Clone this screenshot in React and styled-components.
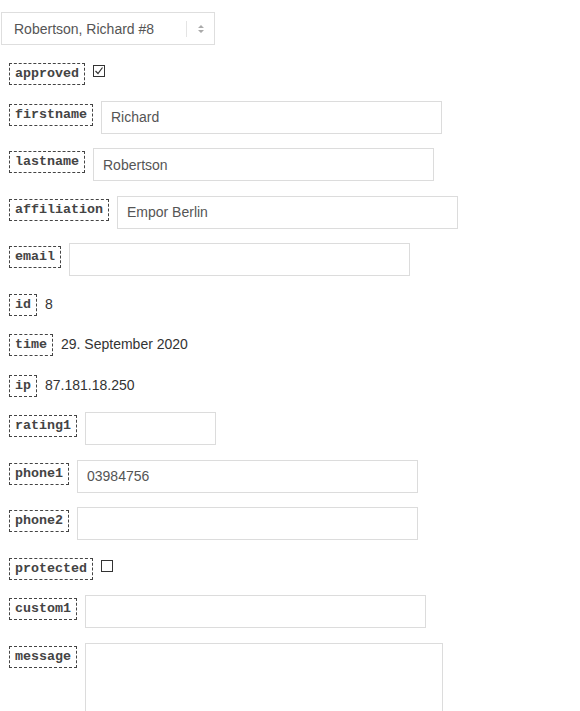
import React from 'react'
import styled, { createGlobalStyle } from 'styled-components'

const GlobalStyle = createGlobalStyle`
  body {
    margin: 0;
    background: #fff;
    font-family: "Liberation Sans", Arial, sans-serif;
  }
`

const Page = styled.div`
  padding: 12px 0 0 1px;
`

const Picker = styled.div`
  display: flex;
  align-items: center;
  box-sizing: border-box;
  width: 214px;
  height: 33px;
  border: 1px solid #dedede;
  padding-left: 12px;
  margin-bottom: 15px;
  font-size: 14px;
  color: #555;
`

const PickerText = styled.span`
  flex: 1;
`

const PickerDivider = styled.span`
  width: 1px;
  height: 16px;
  background: #e4e4e4;
`

const PickerArrows = styled.svg`
  margin: 0 10px 0 11px;
`

const Fields = styled.div`
  padding-left: 8px;
`

const Row = styled.div`
  display: flex;
  align-items: flex-start;
  min-height: 26.1px;
  margin-bottom: 14.5px;
`

const Key = styled.span`
  box-sizing: border-box;
  height: 22px;
  margin: 3px 8px 0 0;
  padding: 0 5px;
  border: 1px dashed #444;
  font-family: "Liberation Mono", "Courier New", monospace;
  font-weight: bold;
  font-size: 13.33px;
  line-height: 20px;
  color: #444;
  white-space: nowrap;
`

const Value = styled.span`
  margin-top: 3px;
  font-size: 14px;
  line-height: 20px;
  color: #333;
`

const Field = styled.input`
  box-sizing: border-box;
  width: ${p => p.$w || 341}px;
  height: 33px;
  margin: 0;
  padding: 0 9px;
  border: 1px solid #dcdcdc;
  border-radius: 0;
  font-family: "Liberation Sans", Arial, sans-serif;
  font-size: 14px;
  color: #555;
  outline: none;
`

const Area = styled.textarea`
  box-sizing: border-box;
  width: 358px;
  height: 110px;
  margin: 0;
  padding: 6px 9px;
  border: 1px solid #dcdcdc;
  border-radius: 0;
  resize: none;
  font-family: "Liberation Sans", Arial, sans-serif;
  font-size: 14px;
  color: #555;
  outline: none;
`

const Tick = styled.span`
  box-sizing: border-box;
  width: 12px;
  height: 12px;
  margin-top: 5px;
  border: 1px solid #333;
  display: flex;
  align-items: center;
  justify-content: center;
`

function Check({ on }) {
  return (
    <Tick>
      {on && (
        <svg width="10" height="10" viewBox="0 0 10 10">
          <path d="M1.5 5 L4 7.5 L8.5 1.5" fill="none" stroke="#333" strokeWidth="1.2" />
        </svg>
      )}
    </Tick>
  )
}

const fields = [
  { key: 'approved', type: 'check', on: true },
  { key: 'firstname', type: 'input', value: 'Richard' },
  { key: 'lastname', type: 'input', value: 'Robertson' },
  { key: 'affiliation', type: 'input', value: 'Empor Berlin' },
  { key: 'email', type: 'input', value: '' },
  { key: 'id', type: 'text', value: '8' },
  { key: 'time', type: 'text', value: '29. September 2020' },
  { key: 'ip', type: 'text', value: '87.181.18.250' },
  { key: 'rating1', type: 'input', value: '', width: 131 },
  { key: 'phone1', type: 'input', value: '03984756' },
  { key: 'phone2', type: 'input', value: '' },
  { key: 'protected', type: 'check', on: false },
  { key: 'custom1', type: 'input', value: '' },
  { key: 'message', type: 'area' },
]

export default function App() {
  return (
    <Page>
      <GlobalStyle />
      <Picker>
        <PickerText>Robertson, Richard #8</PickerText>
        <PickerDivider />
        <PickerArrows width="6" height="10" viewBox="0 0 6 10">
          <path d="M0 4 L3 1 L6 4 Z M0 6 L3 9 L6 6 Z" fill="#aaa" />
        </PickerArrows>
      </Picker>
      <Fields>
        {fields.map(f => (
          <Row key={f.key}>
            <Key>{f.key}</Key>
            {f.type === 'check' && <Check on={f.on} />}
            {f.type === 'text' && <Value>{f.value}</Value>}
            {f.type === 'input' && <Field $w={f.width} defaultValue={f.value} />}
            {f.type === 'area' && <Area />}
          </Row>
        ))}
      </Fields>
    </Page>
  )
}
